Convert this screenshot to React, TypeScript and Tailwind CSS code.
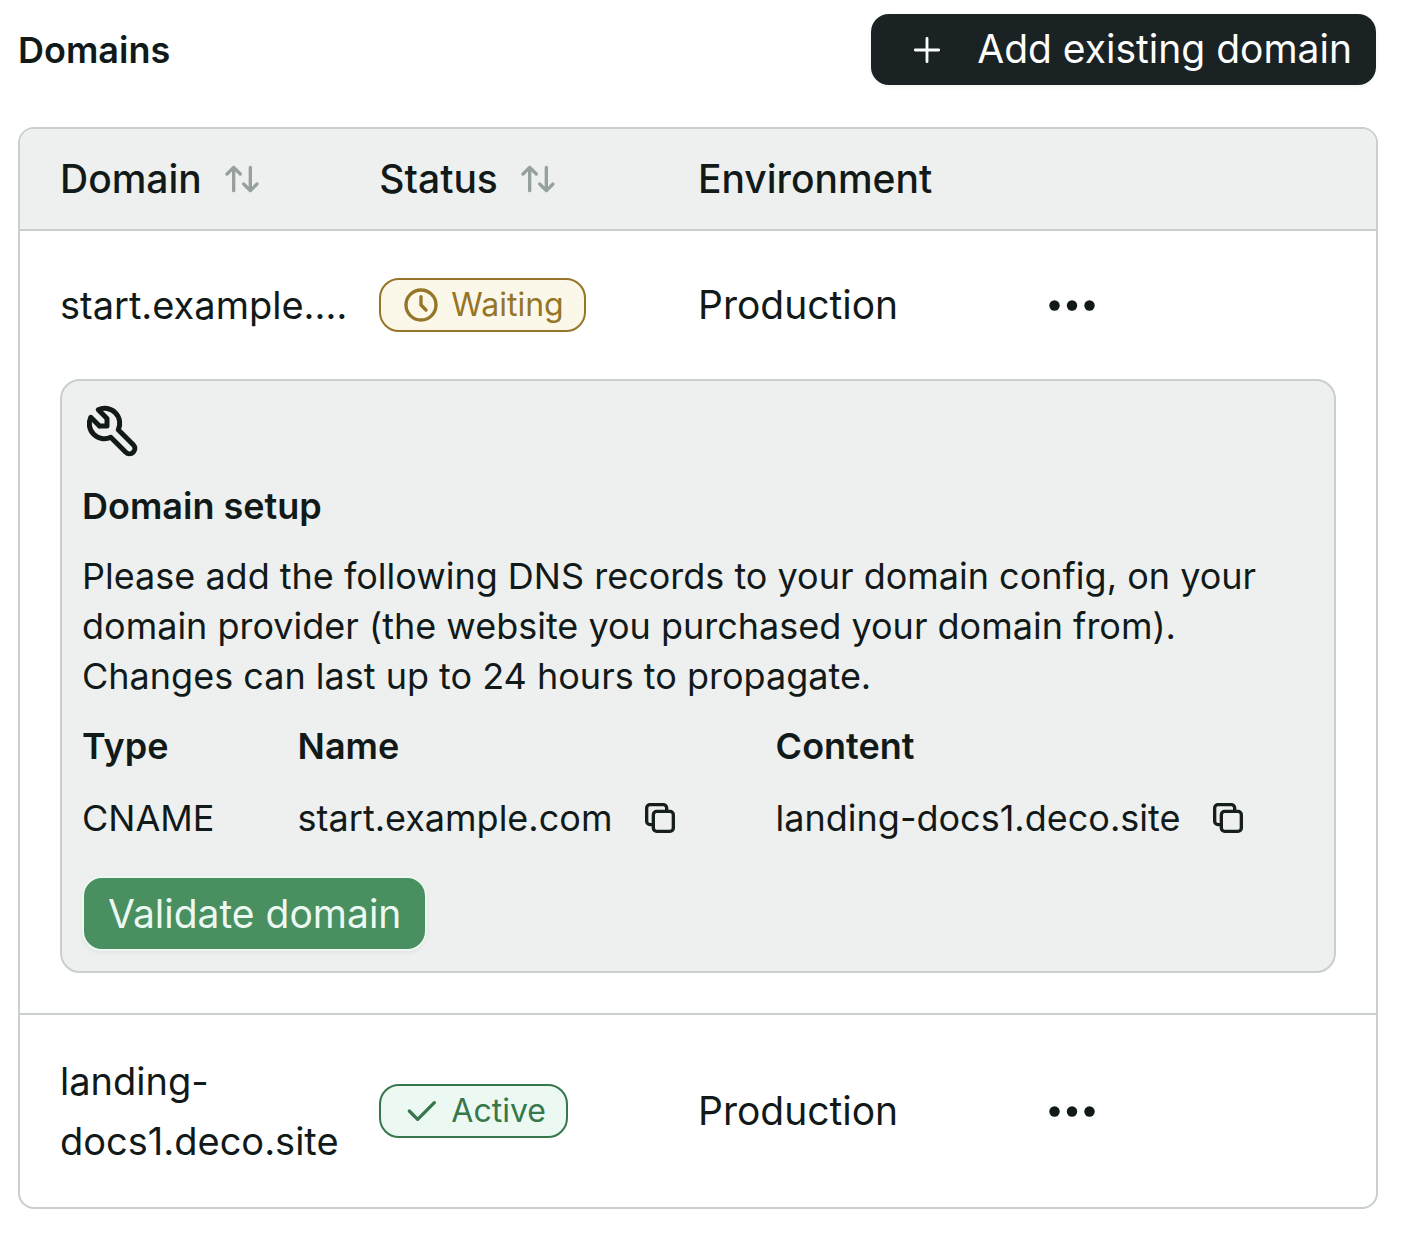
import type { ReactNode } from "react";

function Icon({ children, className = "size-10", strokeWidth = 2 }: { children: ReactNode; className?: string; strokeWidth?: number }) {
  return (
    <svg
      viewBox="0 0 24 24"
      fill="none"
      stroke="currentColor"
      strokeWidth={strokeWidth}
      strokeLinecap="round"
      strokeLinejoin="round"
      aria-hidden="true"
      className={`shrink-0 ${className}`}
    >
      {children}
    </svg>
  );
}

function SortHeader({ label }: { label: string }) {
  return (
    <button type="button" className="flex items-center gap-5">
      {label}
      <Icon className="size-10 text-[#96a19e]">
        <path d="M3 9l4 -4l4 4m-4 -4v14" />
        <path d="M21 15l-4 4l-4 -4m4 4v-14" />
      </Icon>
    </button>
  );
}

function CopyButton({ label }: { label: string }) {
  return (
    <button type="button" aria-label={label} className="text-[#161f1e]">
      <Icon>
        <rect x="8" y="8" width="12" height="12" rx="2" />
        <path d="M16 8v-2a2 2 0 0 0 -2 -2h-8a2 2 0 0 0 -2 2v8a2 2 0 0 0 2 2h2" />
      </Icon>
    </button>
  );
}

function MoreButton() {
  return (
    <button type="button" aria-label="More options" className="flex px-6">
      <svg viewBox="0 0 60 60" fill="currentColor" aria-hidden="true" className="size-15">
        <circle cx="13.5" cy="30.5" r="5.2" />
        <circle cx="31" cy="30.5" r="5.2" />
        <circle cx="48.5" cy="30.5" r="5.2" />
      </svg>
    </button>
  );
}

function Badge({ tone, children }: { tone: "waiting" | "active"; children: ReactNode }) {
  const colors =
    tone === "waiting"
      ? "border-[#957527] bg-[#fcf8e9] text-[#957527]"
      : "border-[#38764c] bg-[#ebf9f2] text-[#38764c]";
  return (
    <span className={`flex h-[54px] w-fit items-center gap-2.5 rounded-[20px] border-2 px-5 text-[32px] ${colors}`}>
      {children}
    </span>
  );
}

function DomainSetup() {
  return (
    <section className="rounded-[20px] border-2 border-[#c9cfce] bg-[#eef0ef] p-5 text-[36px] leading-[50px]">
      <Icon className="size-15">
        <path d="M7 10h3v-3l-3.5 -3.5a6 6 0 0 1 8 8l6 6a2 2 0 0 1 -3 3l-6 -6a6 6 0 0 1 -8 -8l3.5 3.5" />
      </Icon>
      <h2 className="mt-5 font-semibold">Domain setup</h2>
      <p className="mt-5">
        Please add the following DNS records to your domain config, on your domain provider (the website you
        purchased your domain from). Changes can last up to 24 hours to propagate.
      </p>
      <table className="mt-5 w-full table-fixed text-left">
        <colgroup>
          <col className="w-[17.5%]" />
          <col className="w-[38.8%]" />
          <col />
        </colgroup>
        <thead>
          <tr>
            <th className="p-0 font-semibold">Type</th>
            <th className="p-0 font-semibold">Name</th>
            <th className="p-0 font-semibold">Content</th>
          </tr>
        </thead>
        <tbody>
          <tr>
            <td className="pt-[22px]">CNAME</td>
            <td className="pt-[22px]">
              <div className="flex items-center gap-7">
                start.example.com
                <CopyButton label="Copy name" />
              </div>
            </td>
            <td className="pt-[22px]">
              <div className="flex items-center gap-7">
                landing-docs1.deco.site
                <CopyButton label="Copy content" />
              </div>
            </td>
          </tr>
        </tbody>
      </table>
      <button
        type="button"
        className="mt-[33px] flex h-[75px] items-center rounded-[20px] border-2 border-[#ebf9f2] bg-[#498f60] px-6 text-[39px] text-[#ebf9f2] shadow-[0_2px_4px_rgba(0,0,0,0.05)]"
      >
        Validate domain
      </button>
    </section>
  );
}

export default function App() {
  return (
    <main className="bg-white pt-3.5 pr-[26px] pb-7 pl-[18px] font-['Inter','Liberation_Sans',sans-serif] text-[#121a19]">
      <header className="flex items-center justify-between">
        <h1 className="text-[36px] font-semibold">Domains</h1>
        <button
          type="button"
          className="mr-0.5 flex h-[71px] items-center gap-[30px] rounded-[18px] bg-[#1b2223] pr-6 pl-9 text-[39px] text-[#fcfdfd] shadow-[0_2px_4px_rgba(0,0,0,0.05)]"
        >
          <Icon strokeWidth={1.7}>
            <path d="M12 5v14M5 12h14" />
          </Icon>
          Add existing domain
        </button>
      </header>

      <div className="mt-[42px] overflow-hidden rounded-[16px] border-2 border-[#c9cfce]">
        <table className="w-full table-fixed text-left text-[39px] leading-[60px]">
          <colgroup>
            <col className="w-[26.5%]" />
            <col className="w-[23.5%]" />
            <col className="w-[23.5%]" />
            <col className="w-[26.5%]" />
          </colgroup>
          <thead className="border-b-2 border-[#c9cfce] bg-[#eef0ef]">
            <tr>
              <th className="py-5 pl-10 font-medium">
                <SortHeader label="Domain" />
              </th>
              <th className="py-5 font-medium">
                <SortHeader label="Status" />
              </th>
              <th className="py-5 font-medium">Environment</th>
              <th aria-label="Actions" />
            </tr>
          </thead>
          <tbody>
            <tr>
              <td className="py-11 pl-10 text-[38px]">
                <div title="start.example.com" className="whitespace-nowrap">
                  start.example.…
                </div>
              </td>
              <td>
                <Badge tone="waiting">
                  <Icon>
                    <circle cx="12" cy="12" r="9" />
                    <path d="M12 7v5l3 3" />
                  </Icon>
                  Waiting
                </Badge>
              </td>
              <td>Production</td>
              <td>
                <MoreButton />
              </td>
            </tr>
            <tr className="border-b-2 border-[#c9cfce]">
              <td colSpan={4} className="px-10 pb-10">
                <DomainSetup />
              </td>
            </tr>
            <tr>
              <td className="py-9 pl-10 text-[38px]">
                <div className="mr-8">landing-docs1.deco.site</div>
              </td>
              <td>
                <Badge tone="active">
                  <Icon>
                    <path d="M5 12l5 5l10 -10" />
                  </Icon>
                  Active
                </Badge>
              </td>
              <td>Production</td>
              <td>
                <MoreButton />
              </td>
            </tr>
          </tbody>
        </table>
      </div>
    </main>
  );
}
